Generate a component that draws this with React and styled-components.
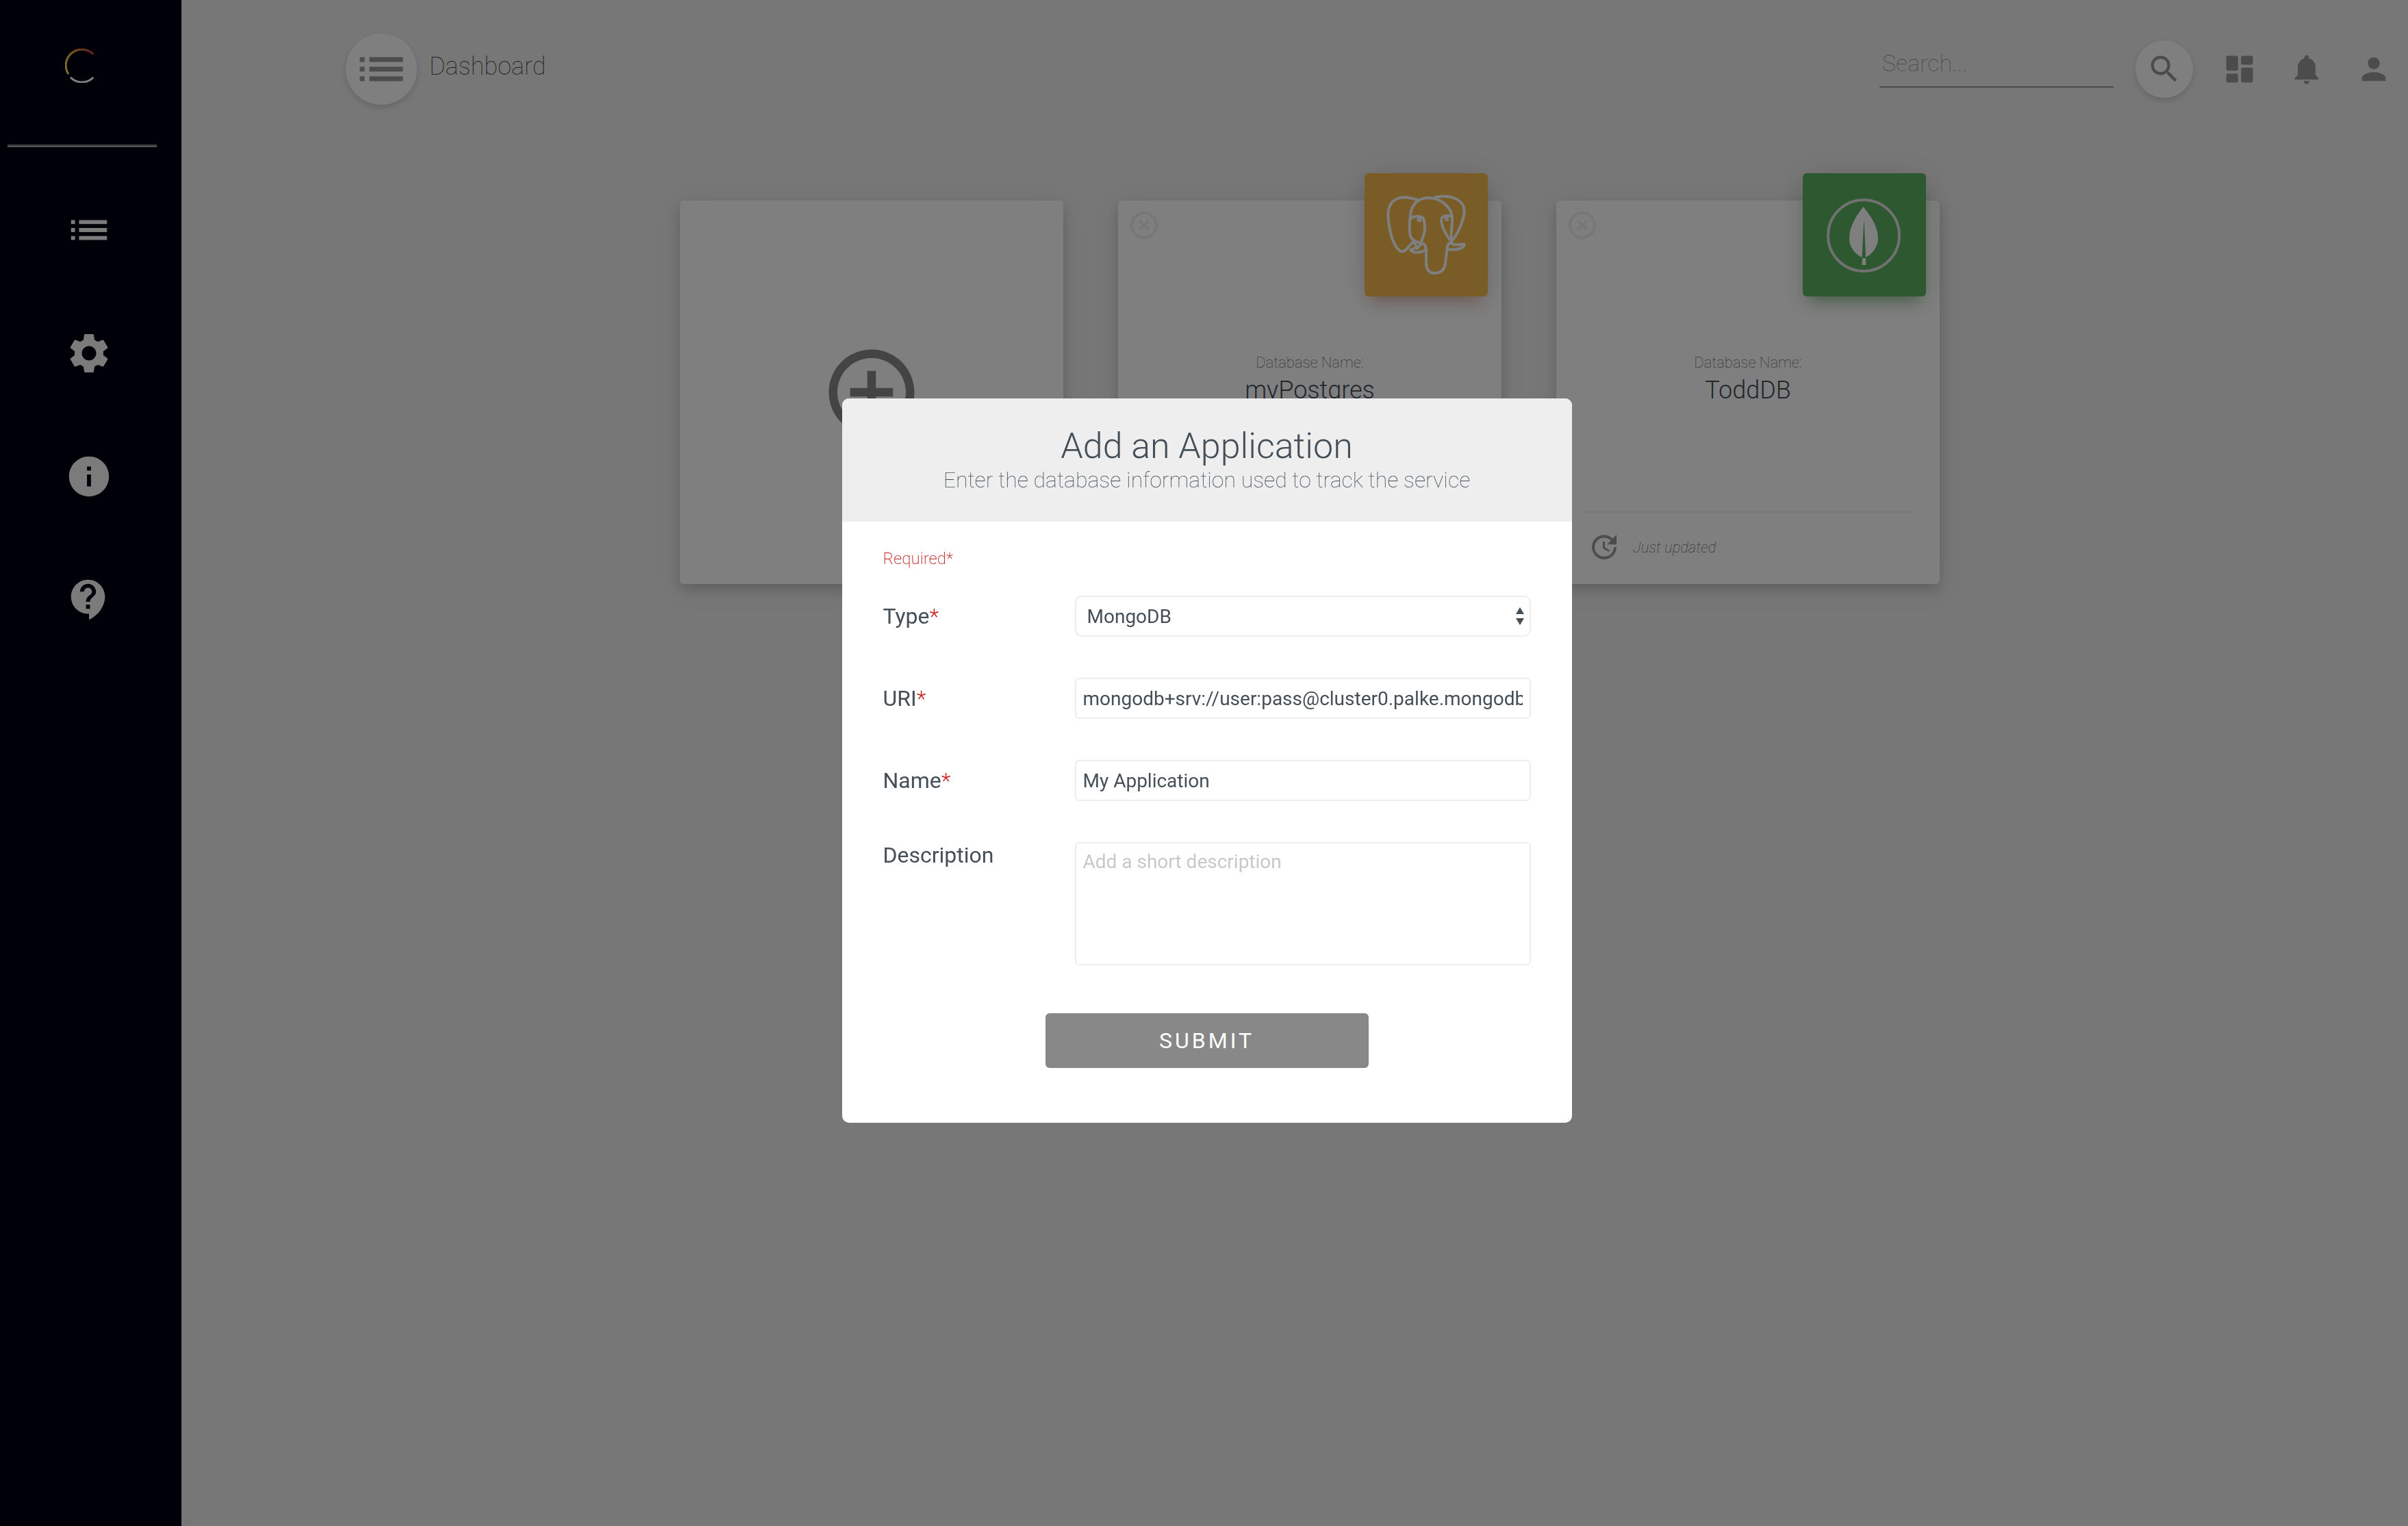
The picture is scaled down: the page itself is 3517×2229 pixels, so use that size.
import React from "react";
import styled, { createGlobalStyle, css } from "styled-components";
import {
  MdList,
  MdSettings,
  MdInfo,
  MdContactSupport,
  MdSearch,
  MdNotifications,
  MdPerson,
  MdAddCircleOutline,
  MdHighlightOff,
  MdUpdate,
} from "react-icons/md";

const GlobalStyle = createGlobalStyle`
  *, *::before, *::after { box-sizing: border-box; }
  body {
    margin: 0;
    background: #eeeeee;
    font-family: Roboto, "Liberation Sans", sans-serif;
    color: #444f58;
  }
  button, input, select, textarea { font-family: inherit; }
`;

const Page = styled.div`
  display: flex;
  min-height: 100vh;
`;

const Sidebar = styled.nav`
  display: flex;
  flex-direction: column;
  flex: 0 0 265px;
  background: #000013;
`;

const LogoLink = styled.a`
  display: flex;
  justify-content: center;
  width: 240px;
  padding: 71px 0 90px;
  line-height: 0;
`;

const Rule = styled.hr`
  width: 218px;
  margin: 0 11px;
  border: 0;
  border-top: 2px solid #767676;
  border-bottom: 2px solid #a2a2a2;
`;

const NavList = styled.ul`
  display: flex;
  flex-direction: column;
  gap: 110px;
  margin: 86px 0 0;
  padding: 0;
  width: 260px;
  list-style: none;
`;

const NavItem = styled.li`
  display: flex;
  justify-content: center;
`;

const NavLink = styled.a`
  display: flex;
  color: #f7f7f7;
  font-size: 70px;
`;

const Main = styled.main`
  flex: 1;
  display: flex;
  flex-direction: column;
  min-width: 0;
`;

const TopBar = styled.header`
  display: flex;
  align-items: center;
  height: 202px;
  padding: 0 24px 0 240px;
`;

const RoundButton = styled.button`
  display: flex;
  align-items: center;
  justify-content: center;
  width: ${(p) => p.$size}px;
  height: ${(p) => p.$size}px;
  padding: 0;
  border: 0;
  border-radius: 50%;
  background: #ffffff;
  color: #999999;
  font-size: ${(p) => p.$icon}px;
  box-shadow: 0 4px 10px rgba(0, 0, 0, 0.14);
`;

const PageTitle = styled.h1`
  margin: 0 auto 8px 18px;
  font-size: 36px;
  font-weight: 100;
  line-height: 44px;
  color: #444444;
`;

const SearchInput = styled.input`
  width: 342px;
  height: 64px;
  margin: 0 32px 10px 0;
  padding: 0 4px 6px;
  border: 0;
  border-bottom: 2px solid #999999;
  background: transparent;
  font-size: 34px;
  font-weight: 100;
  &::placeholder { color: #999999; opacity: 1; }
`;

const Tools = styled.div`
  display: flex;
  gap: 46px;
  margin-left: 42px;
`;

const ToolButton = styled.button`
  display: flex;
  padding: 0;
  border: 0;
  background: none;
  color: #999999;
  font-size: 52px;
`;

const Cards = styled.section`
  display: flex;
  flex-wrap: wrap;
  justify-content: center;
  gap: 80px;
  padding: 91px 0 0 44px;
`;

const cardBox = css`
  width: 560px;
  height: 560px;
  border: 0;
  border-radius: 6px;
  background: #ffffff;
  box-shadow: 0 8px 16px rgba(0, 0, 0, 0.14), 0 8px 40px rgba(0, 0, 0, 0.08);
`;

const AddCard = styled.button`
  ${cardBox}
  display: flex;
  align-items: center;
  justify-content: center;
  padding: 0;
  color: #888888;
  font-size: 150px;
`;

const Card = styled.article`
  ${cardBox}
  position: relative;
  display: flex;
  flex-direction: column;
  align-items: center;
`;

const RemoveButton = styled.button`
  display: flex;
  align-self: flex-start;
  margin: 12px 0 0 14px;
  padding: 0;
  border: 0;
  background: none;
  color: #eeeeee;
  font-size: 48px;
`;

const Badge = styled.div`
  position: absolute;
  top: -40px;
  right: 20px;
  width: 180px;
  height: 180px;
  border-radius: 6px;
  background: ${(p) => p.$color};
  box-shadow: 0 8px 40px rgba(0, 0, 0, 0.14), 0 14px 20px -10px ${(p) => p.$glow};
`;

const CardBody = styled.div`
  flex: 1;
  padding-top: 163px;
  text-align: center;
`;

const Caption = styled.p`
  margin: 0;
  font-size: 22px;
  font-weight: 100;
  line-height: 28px;
  color: #555555;
`;

const DbName = styled.h2`
  margin: 4px 0 0;
  font-size: 36px;
  font-weight: 300;
  line-height: 44px;
`;

const CardFooter = styled.footer`
  display: flex;
  align-items: center;
  gap: 18px;
  width: 85%;
  height: 106px;
  padding: 0 4px 4px;
  border-top: 2px solid #eeeeee;
  color: #999999;
  font-size: 48px;
`;

const Status = styled.span`
  font-size: 22px;
  font-style: italic;
  font-weight: 100;
  color: #555555;
`;

const Overlay = styled.div`
  position: fixed;
  inset: 0;
  display: flex;
  align-items: center;
  justify-content: center;
  padding: 0 0 7px 8px;
  background: rgba(0, 0, 0, 0.5);
`;

const Dialog = styled.div`
  width: 1066px;
  border-radius: 10px;
  background: #ffffff;
  overflow: hidden;
`;

const DialogHeader = styled.header`
  height: 180px;
  padding-top: 40px;
  background: #eeeeee;
  text-align: center;
`;

const DialogTitle = styled.h2`
  margin: 0;
  font-size: 52px;
  font-weight: 300;
  line-height: 60px;
`;

const DialogText = styled.p`
  margin: 0;
  font-size: 32px;
  font-weight: 100;
  line-height: 38px;
`;

const Form = styled.form`
  display: flex;
  flex-direction: column;
  gap: 60px;
  padding: 40px 60px 80px;
`;

const RequiredNote = styled.p`
  margin: 0 0 -20px;
  font-size: 24px;
  font-weight: 200;
  line-height: 28px;
  color: #c3211d;
`;

const Field = styled.div`
  display: flex;
  align-items: ${(p) => (p.$top ? "flex-start" : "center")};
`;

const Label = styled.label`
  flex: 1;
  font-size: 32px;
  line-height: 38px;
`;

const Star = styled.span`
  font-weight: 300;
  color: #c3211d;
`;

const control = css`
  width: 666px;
  border: 2px solid #eeeeee;
  border-radius: 6px;
  background: #ffffff;
  color: #444f58;
  font-size: 28px;
  font-weight: 400;
`;

const Input = styled.input`
  ${control}
  height: 60px;
  padding: 0 10px;
`;

const SelectWrap = styled.div`
  position: relative;
  display: flex;
`;

const Select = styled.select`
  ${control}
  height: 60px;
  padding: 0 16px;
  border-radius: 10px;
  appearance: none;
`;

const SelectArrows = styled.svg`
  position: absolute;
  top: 17px;
  right: 10px;
  pointer-events: none;
`;

const TextArea = styled.textarea`
  ${control}
  display: block;
  height: 180px;
  padding: 10px;
  line-height: 34px;
  resize: none;
  &::placeholder { color: #c8c8c8; opacity: 1; }
`;

const Submit = styled.button`
  align-self: center;
  width: 472px;
  height: 80px;
  margin-top: 10px;
  border: 0;
  border-radius: 6px;
  background: #888888;
  color: #ffffff;
  font-size: 32px;
  letter-spacing: 4px;
`;

function Logo() {
  return (
    <svg width="50" height="50" viewBox="0 0 50 50" fill="none" strokeWidth="3">
      <defs>
        <linearGradient id="arc" x1="2" y1="30" x2="42" y2="8" gradientUnits="userSpaceOnUse">
          <stop offset="0" stopColor="#f8e33c" />
          <stop offset="0.45" stopColor="#e8a63c" />
          <stop offset="1" stopColor="#cc4040" />
        </linearGradient>
      </defs>
      <path d="M41.3 8.3A23.3 23.3 0 0 0 5 37.2" stroke="url(#arc)" />
      <path d="M8 42A23.3 23.3 0 0 0 41.3 42" stroke="#ffffff" />
    </svg>
  );
}

function DashboardIcon() {
  return (
    <svg width="1em" height="1em" viewBox="0 0 24 24" fill="currentColor">
      <path d="M4 13h6c.55 0 1-.45 1-1V4c0-.55-.45-1-1-1H4c-.55 0-1 .45-1 1v8c0 .55.45 1 1 1zm0 8h6c.55 0 1-.45 1-1v-4c0-.55-.45-1-1-1H4c-.55 0-1 .45-1 1v4c0 .55.45 1 1 1zm10 0h6c.55 0 1-.45 1-1v-8c0-.55-.45-1-1-1h-6c-.55 0-1 .45-1 1v8c0 .55.45 1 1 1zM13 4v4c0 .55.45 1 1 1h6c.55 0 1-.45 1-1V4c0-.55-.45-1-1-1h-6c-.55 0-1 .45-1 1z" />
    </svg>
  );
}

function PostgresIcon() {
  return (
    <svg
      width="180"
      height="180"
      viewBox="0 0 180 180"
      fill="none"
      stroke="#ffffff"
      strokeWidth="4"
      strokeLinejoin="round"
      strokeLinecap="round"
    >
      <path d="M77 39C63 34 51 34 43 40C35 46 33 56 35 70C37 88 42 103 49 111C53 116 58 115 62 110L71 100" />
      <path d="M66 84C65 78 66 71 67 62C68 46 78 36 93 36C112 36 126 50 128 63C129 75 125 88 127 99" />
      <path d="M104 35C117 32 134 34 142 44C147 50 146 60 143 69C140 80 134 91 127 100C119 91 112 77 112 68C113 62 120 61 128 63" />
      <path d="M67 66C73 62 83 62 86 66C88 71 88 80 88 84C87 91 83 96 83 102C74 101 66 96 66 86" />
      <path d="M83 102C88 103 90 107 90 113V130C90 140 94 146 102 146C112 146 117 140 118 131L121 107C122 102 125 101 130 104C136 106 141 103 146 104C144 110 135 113 122 111" />
      <path d="M71 101C77 106 78 109 67 112C70 117 84 117 89 111" />
      <path d="M83 103L77 110" />
      <circle cx="80" cy="68" r="1.5" />
      <circle cx="120" cy="67" r="1.2" />
    </svg>
  );
}

function MongoIcon() {
  return (
    <svg width="180" height="180" viewBox="0 0 180 180">
      <circle cx="89" cy="91" r="52" fill="none" stroke="#e2e2e2" strokeWidth="4" />
      <path
        fill="#ffffff"
        fillRule="evenodd"
        d="M88.500 49C98 61 110 77 110 95C110 107 102 118 92 123L89.500 66L86.500 123C76 118 68 108 68 95C68 77 79 61 88.500 49Z"
      />
      <path fill="#ffffff" d="M87 124H92L92.500 134H86.500Z" />
    </svg>
  );
}

const NAV = [
  { label: "Dashboard", Icon: MdList },
  { label: "Settings", Icon: MdSettings },
  { label: "About", Icon: MdInfo },
  { label: "Contact", Icon: MdContactSupport },
];

const TOOLS = [
  { label: "Dashboard", Icon: DashboardIcon },
  { label: "Notifications", Icon: MdNotifications },
  { label: "Account", Icon: MdPerson },
];

const DATABASES = [
  { name: "myPostgres", color: "#f4bb4d", glow: "rgba(233, 100, 50, 0.4)", Icon: PostgresIcon },
  { name: "ToddDB", color: "#5cb360", glow: "rgba(76, 175, 80, 0.6)", Icon: MongoIcon },
];

export default function App() {
  return (
    <>
      <GlobalStyle />
      <Page>
        <Sidebar>
          <LogoLink href="#" aria-label="Home">
            <Logo />
          </LogoLink>
          <Rule />
          <NavList>
            {NAV.map(({ label, Icon }) => (
              <NavItem key={label}>
                <NavLink href="#" aria-label={label}>
                  <Icon />
                </NavLink>
              </NavItem>
            ))}
          </NavList>
        </Sidebar>
        <Main>
          <TopBar>
            <RoundButton $size={104} $icon={84} aria-label="Menu">
              <MdList />
            </RoundButton>
            <PageTitle>Dashboard</PageTitle>
            <SearchInput type="search" placeholder="Search..." aria-label="Search" />
            <RoundButton $size={84} $icon={52} aria-label="Search">
              <MdSearch />
            </RoundButton>
            <Tools>
              {TOOLS.map(({ label, Icon }) => (
                <ToolButton key={label} aria-label={label}>
                  <Icon />
                </ToolButton>
              ))}
            </Tools>
          </TopBar>
          <Cards>
            <AddCard aria-label="Add">
              <MdAddCircleOutline />
            </AddCard>
            {DATABASES.map(({ name, color, glow, Icon }) => (
              <Card key={name}>
                <RemoveButton aria-label="Remove">
                  <MdHighlightOff />
                </RemoveButton>
                <Badge $color={color} $glow={glow}>
                  <Icon />
                </Badge>
                <CardBody>
                  <Caption>Database Name:</Caption>
                  <DbName>{name}</DbName>
                </CardBody>
                <CardFooter>
                  <MdUpdate />
                  <Status>Just updated</Status>
                </CardFooter>
              </Card>
            ))}
          </Cards>
        </Main>
      </Page>
      <Overlay>
        <Dialog role="dialog" aria-modal="true" aria-labelledby="dialog-title">
          <DialogHeader>
            <DialogTitle id="dialog-title">Add an Application</DialogTitle>
            <DialogText>Enter the database information used to track the service</DialogText>
          </DialogHeader>
          <Form onSubmit={(e) => e.preventDefault()}>
            <RequiredNote>Required*</RequiredNote>
            <Field>
              <Label htmlFor="type">
                Type<Star>*</Star>
              </Label>
              <SelectWrap>
                <Select id="type" defaultValue="MongoDB">
                  <option>MongoDB</option>
                  <option>PostgreSQL</option>
                </Select>
                <SelectArrows width="12" height="26" viewBox="0 0 12 26" fill="#444f58">
                  <path d="M6 0L12 10H0ZM0 16H12L6 26Z" />
                </SelectArrows>
              </SelectWrap>
            </Field>
            <Field>
              <Label htmlFor="uri">
                URI<Star>*</Star>
              </Label>
              <Input id="uri" defaultValue="mongodb+srv://user:pass@cluster0.palke.mongodb.net" />
            </Field>
            <Field>
              <Label htmlFor="name">
                Name<Star>*</Star>
              </Label>
              <Input id="name" defaultValue="My Application" />
            </Field>
            <Field $top>
              <Label htmlFor="description">Description</Label>
              <TextArea id="description" placeholder="Add a short description" />
            </Field>
            <Submit type="submit">SUBMIT</Submit>
          </Form>
        </Dialog>
      </Overlay>
    </>
  );
}
